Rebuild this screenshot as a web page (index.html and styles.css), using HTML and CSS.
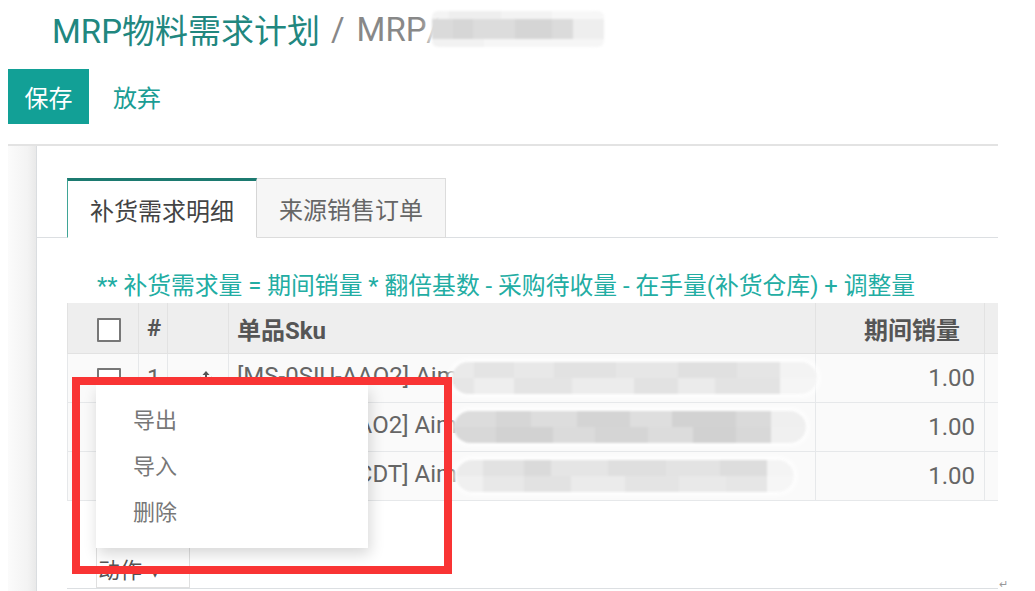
FILE: index.html
```html
<!DOCTYPE html>
<html lang="zh-CN">
<head>
  <meta charset="UTF-8" />
  <title>MRP物料需求计划</title>
  <link rel="stylesheet" href="styles.css">
</head>
<body>

<div class="breadcrumb">
  <span class="bc-main">MRP物料需求计划</span>
  <span class="bc-sep">/</span>
  <span class="bc-cur">MRP/</span><span class="mosaic mosaic-title"></span>
</div>

<div class="buttons">
  <button class="btn-save">保存</button>
  <button class="btn-discard">放弃</button>
</div>

<div class="sheet-wrap">
  <div class="side"></div>
  <div class="sheet">
    <ul class="tabs">
      <li class="tab active">补货需求明细</li>
      <li class="tab">来源销售订单</li>
    </ul>

    <div class="tab-body">
      <p class="formula">** 补货需求量 = 期间销量 * 翻倍基数 - 采购待收量 - 在手量(补货仓库) + 调整量</p>

      <table class="lines">
        <colgroup>
          <col class="c-check"><col class="c-num"><col class="c-handle"><col class="c-sku"><col class="c-qty"><col class="c-more">
        </colgroup>
        <thead>
          <tr>
            <th class="cell-check"><span class="checkbox"></span></th>
            <th class="cell-num">#</th>
            <th></th>
            <th class="cell-sku">单品Sku</th>
            <th class="cell-qty-head">期间销量</th>
            <th></th>
          </tr>
        </thead>
        <tbody>
          <tr>
            <td class="cell-check"><span class="checkbox"></span></td>
            <td class="cell-num">1</td>
            <td class="cell-handle">
              <svg class="handle" width="18" height="18" viewBox="0 0 18 18">
                <path d="M9 1v16M1 9h16" stroke="#555" stroke-width="2" fill="none"/>
                <path d="M9 0l-3.5 4h7zM9 18l-3.5-4h7zM0 9l4-3.5v7zM18 9l-4-3.5v7z" fill="#555"/>
              </svg>
            </td>
            <td class="cell-sku">[MS-0SIU-AAO2] Aim<span class="mosaic mosaic-row r1"></span></td>
            <td class="cell-qty">1.00</td>
            <td></td>
          </tr>
          <tr>
            <td class="cell-check"><span class="checkbox"></span></td>
            <td class="cell-num">2</td>
            <td class="cell-handle"></td>
            <td class="cell-sku">[MS-0SIU-BAO2] Aim<span class="mosaic mosaic-row r2"></span></td>
            <td class="cell-qty">1.00</td>
            <td></td>
          </tr>
          <tr>
            <td class="cell-check"><span class="checkbox"></span></td>
            <td class="cell-num">3</td>
            <td class="cell-handle"></td>
            <td class="cell-sku">[MS-0SIU-PCDT] Aim<span class="mosaic mosaic-row r3"></span></td>
            <td class="cell-qty">1.00</td>
            <td></td>
          </tr>
        </tbody>
      </table>

      <div class="list-footer">
        <button class="btn-action">动作 <span class="caret">▾</span></button>
      </div>
    </div>

    <!-- 动作下拉菜单 + 标注框 -->
    <ul class="dropdown">
      <li>导出</li>
      <li>导入</li>
      <li>删除</li>
    </ul>
    <div class="highlight"></div>
  </div>
</div>

<span class="return-mark">↵</span>

</body>
</html>
```

FILE: styles.css
```css
body { margin: 0; font-family: Roboto, "Noto Sans CJK SC", sans-serif; color: #555; background: #fff; position: relative; height: 591px; overflow: hidden; }

.breadcrumb { height: 58px; padding-left: 52px; display: flex; align-items: center; font-size: 33px; white-space: nowrap; }
.bc-main { color: #21877f; }
.bc-sep { color: #888; margin: 0 12px 0 11px; }
.bc-cur { color: #888; }

.mosaic { display: inline-block; filter: blur(1.2px); }
.mosaic-title { width: 172px; height: 36px; margin-left: -8px; border-radius: 6px; box-shadow: 0 0 8px 4px rgba(255,255,255,0.9);
  background:
    linear-gradient(90deg, #f4f4f4 0 10%, #eeeeee 10% 40%, #f3f3f3 40% 70%, #f7f7f7 70% 100%) top / 100% 22% no-repeat,
    linear-gradient(90deg, #dadada 0 12%, #d6d6d6 12% 24%, #dcdcdc 24% 48%, #d5d5d5 48% 70%, #dbdbdb 70% 82%, #eeeeee 82% 100%) center / 100% 56% no-repeat,
    linear-gradient(90deg, #f2f2f2 0 30%, #f6f6f6 30% 100%) bottom / 100% 22% no-repeat; }

.buttons { margin-top: 11px; padding-left: 8px; display: flex; align-items: center; }
.btn-save { width: 81px; height: 55px; background: #12a096; color: #fff; border: none; font-family: inherit; font-size: 24px; padding: 0; }
.btn-discard { margin-left: 24px; background: none; border: none; padding: 0; color: #1a9d94; font-family: inherit; font-size: 24px; }

.sheet-wrap { margin-top: 20px; margin-left: 8px; width: 990px; height: 447px; display: flex; border-top: 2px solid #e3e3e3; }
.side { width: 28px; background: linear-gradient(90deg, #fbfbfb, #f3f3f3 70%, #e9e9e9); border-right: 1px solid #dadde0; }
.sheet { flex: 1; position: relative; overflow: hidden; padding-top: 32px; }

.tabs { list-style: none; margin: 0; padding-left: 30px; display: flex; border-bottom: 1px solid #dcdfe2; }
.tab { height: 60px; box-sizing: border-box; margin-bottom: -1px; padding: 0 22px; display: flex; align-items: center; font-size: 24px; color: #666; background: #f6f6f6; border: 1px solid #dcdcdc; border-left: none; }
.tab.active { background: #fff; color: #444; border-top: 3px solid #1c7a70; border-left: 1px solid #3fa596; border-right: 1px solid #d6d6d6; border-bottom-color: #fff; }

.tab-body { padding-left: 30px; }
.formula { margin: 33px 0 2px 30px; font-size: 23.8px; line-height: 30px; color: #22ada3; white-space: nowrap; }

.lines { border-collapse: collapse; table-layout: fixed; width: 1030px; font-size: 24px; }
.c-check { width: 71px; } .c-num { width: 29px; } .c-handle { width: 61px; } .c-sku { width: 587px; } .c-qty { width: 169px; } .c-more { width: 113px; }
.lines th { height: 50px; padding: 0; background: #eee; border: 1px solid #e2e2e2; border-top: none; font-size: 24px; font-weight: bold; color: #555; text-align: left; }
.lines td { height: 48px; padding: 0; background: #fafafa; border: 1px solid #e6e8ea; color: #666; white-space: nowrap; }
.cell-check { padding-left: 29px !important; }
.cell-num { padding-left: 8px !important; }
.cell-handle { text-align: right; padding-right: 13px !important; }
.handle { vertical-align: middle; }
.cell-sku { padding-left: 8px !important; overflow: visible; }
.cell-qty { text-align: right; padding-right: 9px !important; }
.cell-qty-head { text-align: right !important; padding-right: 24px !important; }

.checkbox { display: inline-block; width: 20px; height: 20px; border: 2px solid #777; border-radius: 1px; background: #fff; vertical-align: middle; }

.mosaic-row { height: 32px; vertical-align: middle; border-radius: 16px; position: relative; box-shadow: 0 0 5px 3px rgba(255,255,255,0.95); }
.mosaic-row.r1 { width: 365px; margin-left: -6px;
  background:
    linear-gradient(90deg, #eaeaea 0 6%, #e4e4e4 6% 17%, #e8e8e8 17% 28%, #e2e2e2 28% 45%, #e6e6e6 45% 62%, #e0e0e0 62% 78%, #e5e5e5 78% 90%, #f3f3f3 90% 100%) top / 100% 50% no-repeat,
    linear-gradient(90deg, #e6e6e6 0 6%, #eeeeee 6% 17%, #e4e4e4 17% 33%, #ececec 33% 50%, #e2e2e2 50% 62%, #ebebeb 62% 72%, #e3e3e3 72% 90%, #f5f5f5 90% 100%) bottom / 100% 50% no-repeat; }
.mosaic-row.r2 { width: 352px; margin-left: -3px;
  background:
    linear-gradient(90deg, #dcdcdc 0 12%, #d6d6d6 12% 22%, #dddddd 22% 35%, #d4d4d4 35% 50%, #dedede 50% 62%, #d2d2d2 62% 80%, #dadada 80% 90%, #efefef 90% 100%) top / 100% 50% no-repeat,
    linear-gradient(90deg, #d8d8d8 0 12%, #d2d2d2 12% 28%, #dbdbdb 28% 40%, #d5d5d5 40% 55%, #dcdcdc 55% 68%, #d1d1d1 68% 80%, #d8d8d8 80% 90%, #f0f0f0 90% 100%) bottom / 100% 50% no-repeat; }
.mosaic-row.r3 { width: 338px; margin-left: -1px;
  background:
    linear-gradient(90deg, #ebebeb 0 8%, #e2e2e2 8% 20%, #dadada 20% 28%, #e5e5e5 28% 45%, #dfdfdf 45% 62%, #e3e3e3 62% 78%, #dddddd 78% 92%, #f4f4f4 92% 100%) top / 100% 50% no-repeat,
    linear-gradient(90deg, #f0f0f0 0 8%, #e8e8e8 8% 20%, #e2e2e2 20% 34%, #ebebeb 34% 50%, #e4e4e4 50% 66%, #e9e9e9 66% 80%, #e6e6e6 80% 92%, #f6f6f6 92% 100%) bottom / 100% 50% no-repeat; }

.list-footer { margin-top: 47px; height: 40px; border-bottom: 1px solid #dcdfe2; padding-left: 29px; }
.btn-action { height: 40px; width: 94px; padding: 0 0 0 1px; text-align: left; background: #fff; border: 1px solid #e0e0e0; border-top: none; font-family: inherit; font-size: 22px; color: #555; }
.caret { font-size: 16px; margin-left: 4px; }

.dropdown { position: absolute; left: 59px; top: 239px; width: 272px; height: 163px; box-sizing: border-box; margin: 0; padding: 13px 0 0 37px; list-style: none; background: #fff; box-shadow: 2px 6px 14px rgba(0,0,0,0.16); font-size: 22px; color: #777; }
.dropdown li { height: 46px; line-height: 46px; }

.highlight { position: absolute; left: 35px; top: 231px; width: 380px; height: 197px; box-sizing: border-box; border: 8px solid #f93434; }

.return-mark { position: absolute; left: 999px; top: 578px; font-size: 11px; color: #999; }
```
